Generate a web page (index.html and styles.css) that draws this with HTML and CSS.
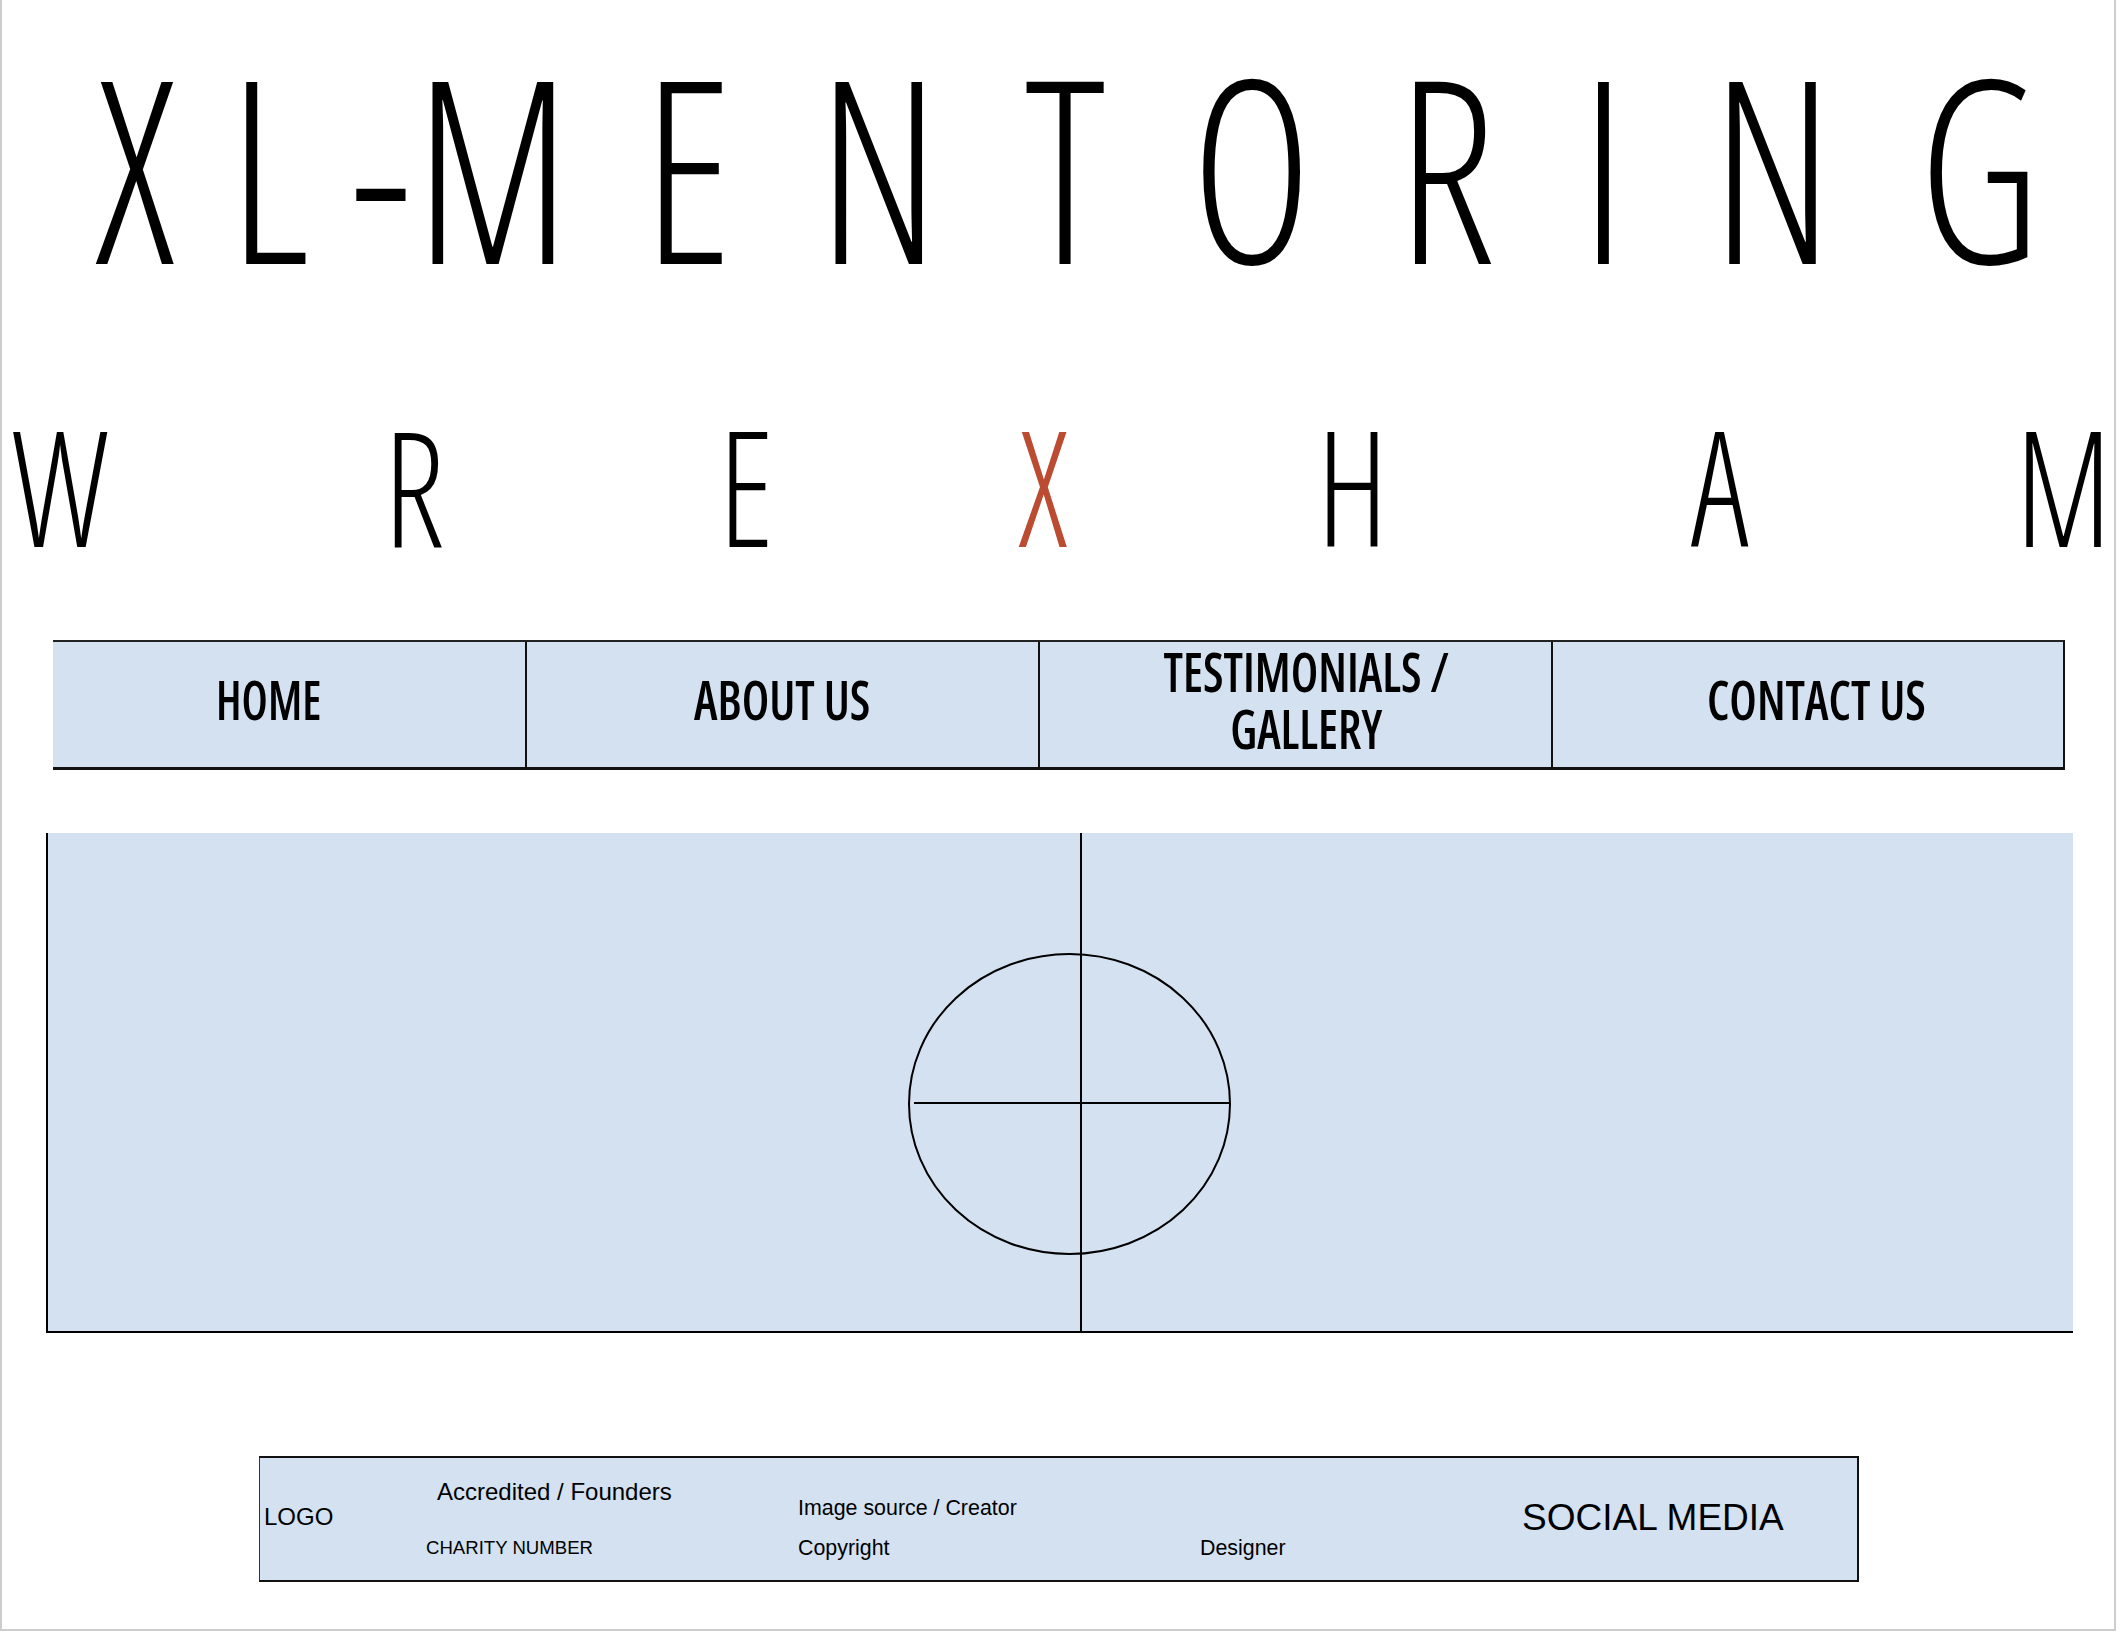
FILE: index.html
```html
<!DOCTYPE html>
<html lang="en">
<head>
<meta charset="UTF-8">
<meta name="viewport" content="width=device-width, initial-scale=1.0">
<title>XL-Mentoring Wrexham</title>
<link rel="stylesheet" href="styles.css">
</head>
<body>

<div class="page">
  <header class="masthead">
    <h1 class="title"><span class="title-x">X</span><span class="title-l">L</span><span class="title-dash">-</span><span class="title-m">M</span>ENTORING</h1>
    <div class="place">
      <span>W</span>
      <span>R</span>
      <span>E</span>
      <span class="accent">X</span>
      <span>H</span>
      <span>A</span>
      <span>M</span>
    </div>
  </header>

  <nav class="menu">
    <a class="menu-item menu-home" href="#"><span>HOME</span></a>
    <a class="menu-item" href="#"><span>ABOUT US</span></a>
    <a class="menu-item menu-gallery" href="#"><span>TESTIMONIALS /<br>GALLERY</span></a>
    <a class="menu-item menu-contact" href="#"><span>CONTACT US</span></a>
  </nav>

  <section class="hero">
    <!-- image placeholder -->
    <svg class="hero-mark" viewBox="0 0 2025 498" preserveAspectRatio="none">
      <line x1="1033" y1="0" x2="1033" y2="498" stroke="#000" stroke-width="2"/>
      <ellipse cx="1021.5" cy="271" rx="160.5" ry="150" fill="none" stroke="#000" stroke-width="2"/>
      <line x1="866" y1="270" x2="1182" y2="270" stroke="#000" stroke-width="2"/>
    </svg>
  </section>

  <footer class="foot">
    <div class="foot-col foot-logo">LOGO</div>
    <div class="foot-col foot-charity">
      <div class="foot-accredited">Accredited / Founders</div>
      <div class="foot-number">CHARITY NUMBER</div>
    </div>
    <div class="foot-col foot-image">
      <div class="foot-source">Image source / Creator</div>
      <div class="foot-copy">Copyright</div>
    </div>
    <div class="foot-col foot-designer">Designer</div>
    <div class="foot-col foot-social">SOCIAL MEDIA</div>
  </footer>
</div>

</body>
</html>
```

FILE: styles.css
```css
body {
  margin: 0;
  padding: 0;
  background-color: #fff;
  color: #000;
  font-family: "Liberation Sans", Arial, sans-serif;
}
.page {
  box-sizing: border-box;
  width: 2116px;
  height: 1631px;
  border-left: 2px solid #cdcdcd;
  border-right: 2px solid #cdcdcd;
  border-bottom: 2px solid #cdcdcd;
}

/* masthead */
.masthead {
  font-family: "Open Sans", sans-serif;
  font-stretch: 75%;
  font-weight: 300;
}
.title {
  width: max-content;
  margin: 0;
  padding: 38px 0 0 102px;
  font-size: 255px;
  line-height: 255px;
  font-weight: 300;
  letter-spacing: 95px;
  white-space: nowrap;
  transform: scaleX(0.9);
  transform-origin: 0 0;
}
.title-x {
  letter-spacing: 59px;
}
.title-l {
  letter-spacing: 45px;
}
.title-dash {
  letter-spacing: 4px;
}
.title-m {
  letter-spacing: 81px;
}
.place {
  display: grid;
  grid-template-columns: 116px 592px 72px 522px 98px 636px 50px;
  justify-items: center;
  margin-top: 111px;
  font-size: 161px;
  line-height: 161px;
}
.place span {
  transform: scaleX(0.88);
}
.accent {
  color: #bb4b31;
}

/* menu */
.menu {
  display: flex;
  box-sizing: border-box;
  width: 2012px;
  height: 130px;
  margin: 75px 0 0 51px;
  background-color: #d4e1f1;
  border-top: 2px solid #222;
  border-bottom: 3px solid #111;
  border-right: 2px solid #111;
}
.menu-item {
  display: flex;
  align-items: center;
  justify-content: center;
  box-sizing: border-box;
  flex: 0 0 513px;
  padding-bottom: 12px;
  border-left: 2px solid #111;
  color: #000;
  text-decoration: none;
  text-align: center;
  font-family: "Open Sans", sans-serif;
  font-stretch: 75%;
  font-weight: 650;
  font-size: 55px;
  line-height: 57px;
}
.menu-item span {
  display: inline-block;
  transform: scaleX(0.88);
  white-space: nowrap;
}
.menu-home {
  flex: 0 0 472px;
  padding-right: 41px;
  border-left: none;
}
.menu-home span {
  transform: scaleX(0.84);
}
.menu-gallery {
  padding-left: 21px;
}
.menu-contact {
  flex: 1;
  padding-left: 16px;
}

/* hero */
.hero {
  box-sizing: border-box;
  width: 2027px;
  height: 500px;
  margin: 63px 0 0 44px;
  background-color: #d4e1f1;
  border-left: 2px solid #000;
  border-bottom: 2px solid #000;
}
.hero-mark {
  display: block;
  width: 100%;
  height: 100%;
}

/* footer */
.foot {
  display: flex;
  box-sizing: border-box;
  width: 1600px;
  height: 126px;
  margin: 123px 0 0 257px;
  background-color: #d4e1f1;
  border-top: 2px solid #111;
  border-bottom: 2px solid #111;
  border-right: 2px solid #111;
  border-left: 1px solid #333;
}
.foot-col {
  flex: none;
  box-sizing: border-box;
}
.foot-logo {
  width: 165px;
  padding: 47px 0 0 4px;
  font-size: 24px;
  line-height: 24px;
}
.foot-charity {
  width: 373px;
  padding-top: 22px;
}
.foot-accredited {
  margin-left: 12px;
  font-size: 24px;
  line-height: 24px;
}
.foot-number {
  margin: 35px 0 0 1px;
  font-size: 18.6px;
  line-height: 18.6px;
}
.foot-image {
  width: 399px;
  padding-top: 40px;
  font-size: 21.4px;
  line-height: 21.4px;
}
.foot-copy {
  margin-top: 19px;
}
.foot-designer {
  width: 325px;
  padding: 80px 0 0 3px;
  font-size: 21.4px;
  line-height: 21.4px;
}
.foot-social {
  padding-top: 41px;
  font-size: 37px;
  line-height: 37px;
}
```
